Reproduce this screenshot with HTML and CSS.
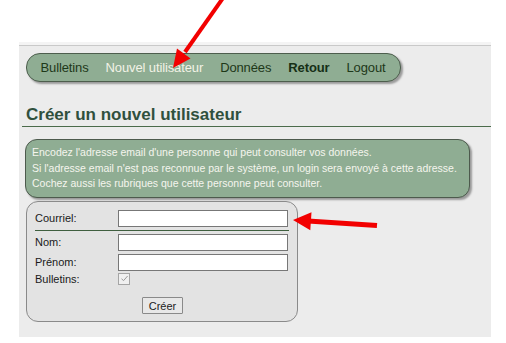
FILE: index.html
```html
<!DOCTYPE html>
<html lang="fr">
<head>
<meta charset="UTF-8" />
<meta name="viewport" content="width=device-width, initial-scale=1" />
<title>Créer un nouvel utilisateur</title>
<link rel="stylesheet" href="styles.css">
</head>
<body>

  <div class="page">
    <div class="topbar"></div>

    <div class="menu">
      <a href="#">Bulletins</a>
      <a href="#" class="active">Nouvel utilisateur</a>
      <a href="#">Données</a>
      <a href="#" class="bold">Retour</a>
      <a href="#">Logout</a>
    </div>

    <h2 class="title">Créer un nouvel utilisateur</h2>

    <div class="info">
      Encodez l'adresse email d'une personne qui peut consulter vos données.<br>
      Si l'adresse email n'est pas reconnue par le système, un login sera envoyé à cette adresse.<br>
      Cochez aussi les rubriques que cette personne peut consulter.
    </div>

    <form class="user-form">
      <div class="row first">
        <label>Courriel:</label>
        <input type="text">
      </div>
      <div class="sep"></div>
      <div class="row">
        <label>Nom:</label>
        <input type="text">
      </div>
      <div class="row">
        <label>Prénom:</label>
        <input type="text">
      </div>
      <div class="row check">
        <label>Bulletins:</label>
        <span class="checkbox">
          <svg width="9" height="9" viewBox="0 0 9 9"><path d="M1.5 4.8 L3.6 6.6 L7.6 2" fill="none" stroke="#9a9a9a" stroke-width="1"/></svg>
        </span>
      </div>
      <div class="actions">
        <button type="button">Créer</button>
      </div>
    </form>
  </div>

  <svg class="arrows" width="506" height="343" viewBox="0 0 506 343">
    <line x1="223" y1="-2" x2="185" y2="52" stroke="#f20000" stroke-width="4"/>
    <polygon points="173,68 190.5,58.5 177,48.5" fill="#f20000"/>
    <line x1="377" y1="225.5" x2="308" y2="221" stroke="#f20000" stroke-width="5"/>
    <polygon points="293,220 311.5,212.3 310.3,230.3" fill="#f20000"/>
  </svg>

</body>
</html>
```

FILE: styles.css
```css
body {
  margin: 0;
  background: #fff;
  font-family: "Liberation Sans", Arial, sans-serif;
  position: relative;
}
.page {
  margin: 42px 0 0 19px;
  width: 472px;
  height: 295px;
  background: #ececec;
  box-sizing: border-box;
  padding: 0 0 0 6px;
}
.topbar {
  height: 3px;
  margin-left: -6px;
  background: #f4f4f4;
  border-bottom: 1px solid #c9c9c9;
}
.menu {
  display: inline-flex;
  align-items: center;
  margin: 7px 0 0 1px;
  height: 27px;
  padding: 0 6px 0 5px;
  background: #8fad93;
  border: 1px solid #4d5e4d;
  border-radius: 14px;
  box-shadow: 2px 2px 2px rgba(0, 0, 0, 0.35);
}
.menu a {
  font-size: 13px;
  color: #1e3819;
  text-decoration: none;
  padding: 0 8.5px;
  letter-spacing: -0.12px;
}
.menu a.active {
  color: #f2f2e6;
}
.menu a.bold {
  font-weight: bold;
  color: #163016;
}
.title {
  margin: 24px 0 0 -3px;
  padding: 0 0 2px 4px;
  font-size: 17px;
  line-height: 18px;
  color: #30503d;
  border-bottom: 1px solid #4b6b4b;
}
.info {
  margin-top: 12px;
  width: 445px;
  box-sizing: border-box;
  padding: 5px 6px 5px 6px;
  background: #8fad93;
  border: 1px solid #4d5a4d;
  border-radius: 12px;
  box-shadow: 2px 2px 2px rgba(0, 0, 0, 0.35);
  color: #f5f5ee;
  font-size: 10.5px;
  line-height: 15.5px;
  white-space: nowrap;
}
.user-form {
  margin: 3px 0 0 1px;
  width: 272px;
  height: 121px;
  box-sizing: border-box;
  padding: 8px 0 0 8px;
  background: #e3e3e3;
  border: 1.5px solid #8a8a8a;
  border-radius: 12px;
}
.row {
  display: flex;
  align-items: center;
  margin-bottom: 3px;
}
.row label {
  width: 83px;
  font-size: 11px;
  color: #1a1a1a;
}
.row input {
  width: 170px;
  height: 17px;
  box-sizing: border-box;
  border: 1px solid #777;
  background: #fff;
  margin: 0;
  padding: 0 2px;
}
.sep {
  width: 254px;
  border-top: 1px solid #3f5f3f;
  margin: 2px 0 3px 0;
}
.row.check {
  margin-top: -1px;
}
.checkbox {
  display: inline-flex;
  align-items: center;
  justify-content: center;
  width: 10px;
  height: 10px;
  border: 1px solid #a5a5a5;
  background: #f0f0f0;
}
.actions {
  margin-top: 11px;
  padding-left: 107px;
}
.actions button {
  width: 41px;
  height: 17px;
  padding: 0;
  font-family: "Liberation Sans", Arial, sans-serif;
  font-size: 11px;
  color: #222;
  background: #e8e8e8;
  border: 1px solid #8a8a8a;
  border-radius: 1px;
}
.arrows {
  position: absolute;
  top: 0;
  left: 0;
  pointer-events: none;
}
```
